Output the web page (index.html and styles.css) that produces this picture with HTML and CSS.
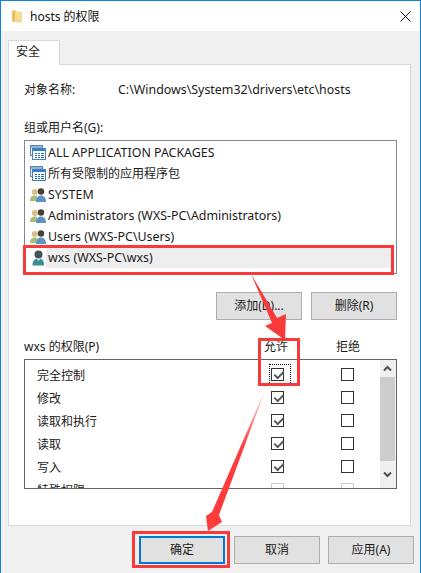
FILE: index.html
```html
<!DOCTYPE html>
<html lang="zh">
<head>
<meta charset="utf-8">
<title>hosts 的权限</title>
<link rel="stylesheet" href="styles.css">
</head>
<body>
<svg class="defs" width="0" height="0" aria-hidden="true">
  <defs>
    <symbol id="i-package" viewBox="0 0 16 16">
      <rect x="0.5" y="0.5" width="12" height="10" fill="#e8f1fa" stroke="#5f86ad"/>
      <rect x="1" y="1" width="11" height="2" fill="#8fb4d8"/>
      <rect x="2.5" y="3.5" width="13" height="11" fill="#fff" stroke="#4a7eb3"/>
      <rect x="3" y="4" width="12" height="2" fill="#2f7fd0"/>
      <path d="M5 8h2v1H5zM8 8h2v1H8zM11 8h3v1h-3zM5 10h2v1H5zM8 10h2v1H8zM11 10h3v1h-3zM5 12h2v1H5zM8 12h2v1H8zM11 12h3v1h-3z" fill="#1e70c8"/>
    </symbol>
    <symbol id="i-group" viewBox="0 0 16 16">
      <circle cx="4.8" cy="5" r="3" fill="#d9c08a"/>
      <path d="M0 14c0-4 1.800-5.600 4.600-5.600S8 10 8 14z" fill="#a3bf78"/>
      <circle cx="11" cy="4.500" r="3.200" fill="#4a3f38"/>
      <path d="M6 15c0-4.400 2-6.600 5-6.600s5 2.200 5 6.600z" fill="#5c94c4"/>
    </symbol>
    <symbol id="i-user" viewBox="0 0 16 16">
      <circle cx="8.500" cy="4.500" r="4" fill="#46525c"/>
      <path d="M2.500 15.500c0-5 2-7 6-7s5.500 2 5.500 7z" fill="#3b8f93"/>
      <path d="M6.500 8.500l2 2.500 2-2.500z" fill="#dfe8e8"/>
    </symbol>
  </defs>
</svg>

<div class="stage">
  <div class="window">
    <header class="titlebar">
      <svg class="folder" width="10" height="14" viewBox="0 0 10 14">
        <path d="M0 1.500h4v11.500l-4-0.500z" fill="#e5c063"/>
        <path d="M3 2.500h7v11H3z" fill="#f6dc8e"/>
      </svg>
      <span class="title">hosts 的权限</span>
      <svg class="close" width="11" height="11" viewBox="0 0 11 11">
        <path d="M0.500 0.500l10 10M10.500 0.500l-10 10" stroke="#111" fill="none"/>
      </svg>
    </header>

    <main class="content">
      <div class="tabs"><div class="tab">安全</div></div>
      <section class="panel">
        <div class="object-row">
          <span class="object-label">对象名称:</span>
          <span class="latin">C:\Windows\System32\drivers\etc\hosts</span>
        </div>

        <div class="group-label">组或用户名(G):</div>
        <ul class="user-list">
          <li class="user"><svg class="uicon"><use href="#i-package"/></svg><span class="uname latin">ALL APPLICATION PACKAGES</span></li>
          <li class="user"><svg class="uicon"><use href="#i-package"/></svg><span class="uname">所有受限制的应用程序包</span></li>
          <li class="user"><svg class="uicon"><use href="#i-group"/></svg><span class="uname latin">SYSTEM</span></li>
          <li class="user"><svg class="uicon"><use href="#i-group"/></svg><span class="uname latin">Administrators (WXS-PC\Administrators)</span></li>
          <li class="user"><svg class="uicon"><use href="#i-group"/></svg><span class="uname latin">Users (WXS-PC\Users)</span></li>
          <li class="user selected"><svg class="uicon"><use href="#i-user"/></svg><span class="uname latin">wxs (WXS-PC\wxs)</span></li>
        </ul>

        <div class="list-actions">
          <button class="btn">添加(D)...</button>
          <button class="btn">删除(R)</button>
        </div>

        <div class="perm-head">
          <span class="perm-title">wxs 的权限(P)</span>
          <span class="perm-col">允许</span>
          <span class="perm-col deny-col">拒绝</span>
        </div>

        <div class="perm-box">
          <div class="perm-rows">
            <div class="perm-row"><span class="perm-name">完全控制</span><span class="check on focus"></span><span class="check deny"></span></div>
            <div class="perm-row"><span class="perm-name">修改</span><span class="check on"></span><span class="check deny"></span></div>
            <div class="perm-row"><span class="perm-name">读取和执行</span><span class="check on"></span><span class="check deny"></span></div>
            <div class="perm-row"><span class="perm-name">读取</span><span class="check on"></span><span class="check deny"></span></div>
            <div class="perm-row"><span class="perm-name">写入</span><span class="check on"></span><span class="check deny"></span></div>
            <div class="perm-row"><span class="perm-name">特殊权限</span><span class="check off"></span><span class="check off deny"></span></div>
          </div>
          <div class="scrollbar">
            <div class="sb-btn">
              <svg width="9" height="7" viewBox="0 0 9 7"><path d="M1 5.500l3.500-3.500 3.500 3.500" fill="none" stroke="#505050" stroke-width="2"/></svg>
            </div>
            <div class="sb-thumb"></div>
            <div class="sb-btn sb-down">
              <svg width="9" height="7" viewBox="0 0 9 7"><path d="M1 1.500l3.500 3.500 3.500-3.500" fill="none" stroke="#505050" stroke-width="2"/></svg>
            </div>
          </div>
        </div>
      </section>

      <footer class="footer">
        <button class="btn primary">确定</button>
        <button class="btn">取消</button>
        <button class="btn">应用(A)</button>
      </footer>
    </main>
  </div>

  <svg class="annotations" width="421" height="573" viewBox="0 0 421 573" aria-hidden="true">
    <defs>
      <linearGradient id="tail" gradientUnits="userSpaceOnUse" x1="266" y1="388" x2="240" y2="445">
        <stop offset="0" stop-color="#ff3b3b" stop-opacity="0.15"/>
        <stop offset="1" stop-color="#ff3b3b"/>
      </linearGradient>
    </defs>
    <g fill="none" stroke="#f93a3a" stroke-width="3">
      <rect x="24.500" y="246.500" width="368" height="27"/>
      <rect x="259.500" y="339.500" width="39" height="45"/>
      <rect x="133.500" y="532.500" width="95" height="34"/>
    </g>
    <polygon points="251,274 277,318 286,314 285,340 265,326 272,323" fill="#f93a3a"/>
    <polygon points="266,388 219,515 222,522 208,531 206,516 212,512" fill="url(#tail)"/>
  </svg>
</div>
</body>
</html>
```
FILE: styles.css
```css
* { box-sizing: border-box; }
html, body { margin: 0; padding: 0; }
body {
  font-family: "Noto Sans", "Noto Sans CJK SC", sans-serif;
  font-size: 12px;
  line-height: 18px;
  color: #1a1a1a;
  background: #f0f0f0;
}
.defs { position: absolute; }
.stage { position: relative; width: 421px; height: 573px; overflow: hidden; }
.window {
  width: 421px;
  height: 573px;
  border: 1px solid #0a84e0;
  border-bottom: 0;
  background: #f0f0f0;
  display: flex;
  flex-direction: column;
}
.titlebar {
  height: 30px;
  background: #fff;
  display: flex;
  align-items: center;
  padding: 0 9px 0 11px;
  flex: none;
}
.folder { flex: none; }
.title { margin-left: 8px; flex: 1; color: #111; padding-top: 1px; }
.close { flex: none; }
.content { flex: 1; padding: 9px 9px 0 7px; display: flex; flex-direction: column; }
.tabs { display: flex; height: 24px; position: relative; z-index: 1; }
.tab {
  width: 52px;
  height: 25px;
  background: #fff;
  border: 1px solid #d9d9d9;
  border-bottom: 0;
  padding: 2px 0 0 7px;
}
.panel {
  height: 462px;
  width: 403px;
  background: #fff;
  border: 1px solid #d9d9d9;
  padding: 16px 0 0 15px;
  flex: none;
}
.latin { font-size: 12.4px; }
.object-row { display: flex; height: 16px; }
.object-label { width: 94px; }
.group-label { margin-top: 22px; height: 16px; }
.user-list {
  list-style: none;
  margin: 5px 0 0;
  padding: 1px 5px 0 5px;
  width: 373px;
  height: 134px;
  border: 1px solid #828790;
}
.user { display: flex; height: 21px; align-items: center; }
.uicon { width: 16px; height: 16px; flex: none; }
.uname { flex: 1; height: 21px; line-height: 22px; padding-left: 2px; white-space: nowrap; }
.selected .uname { background: #eeeeee; }
.list-actions { display: flex; justify-content: flex-end; gap: 9px; margin-top: 18px; width: 373px; }
.btn {
  width: 86px;
  height: 28px;
  padding: 0;
  font: inherit;
  color: #1a1a1a;
  background: #e1e1e1;
  border: 1px solid #adadad;
  border-radius: 0;
}
.primary { border: 2px solid #0078d7; margin-right: 1px; }
.perm-head { display: flex; margin-top: 18px; height: 16px; }
.perm-title { width: 240px; }
.perm-col { width: 24px; white-space: nowrap; }
.deny-col { margin-left: 48px; }
.perm-box {
  margin-top: 5px;
  width: 373px;
  height: 130px;
  border: 1px solid #646464;
  display: flex;
}
.perm-rows { flex: 1; padding-top: 3px; overflow: hidden; }
.perm-row { display: flex; align-items: center; height: 23px; }
.perm-name { flex: none; width: 246px; padding: 2px 0 0 12px; white-space: nowrap; }
.check {
  width: 13px;
  height: 13px;
  flex: none;
  border: 1px solid #333;
  background: #fff;
  position: relative;
}
.check.deny { margin-left: 57px; }
.check.off { border-color: #cccccc; }
.check.on::before {
  content: "";
  position: absolute;
  left: 2px;
  top: 2px;
  width: 8px;
  height: 4px;
  border-left: 2px solid #555;
  border-bottom: 2px solid #555;
  transform: rotate(-45deg) scale(0.95, 0.95);
}
.check.focus::after {
  content: "";
  position: absolute;
  left: -3px;
  top: -5px;
  width: 20px;
  height: 19px;
  border: 1px dotted #111;
}
.scrollbar { width: 16px; background: #f0f0f0; display: flex; flex-direction: column; flex: none; padding-right: 1px; }
.sb-btn { height: 17px; display: flex; align-items: center; justify-content: center; flex: none; }
.sb-thumb { height: 84px; background: #cdcdcd; flex: none; }
.sb-down { flex: 1; height: auto; }
.footer { display: flex; justify-content: flex-end; gap: 8px; margin-top: 10px; padding-right: 6px; width: 412px; }
.annotations { position: absolute; left: 0; top: 0; pointer-events: none; }
```
